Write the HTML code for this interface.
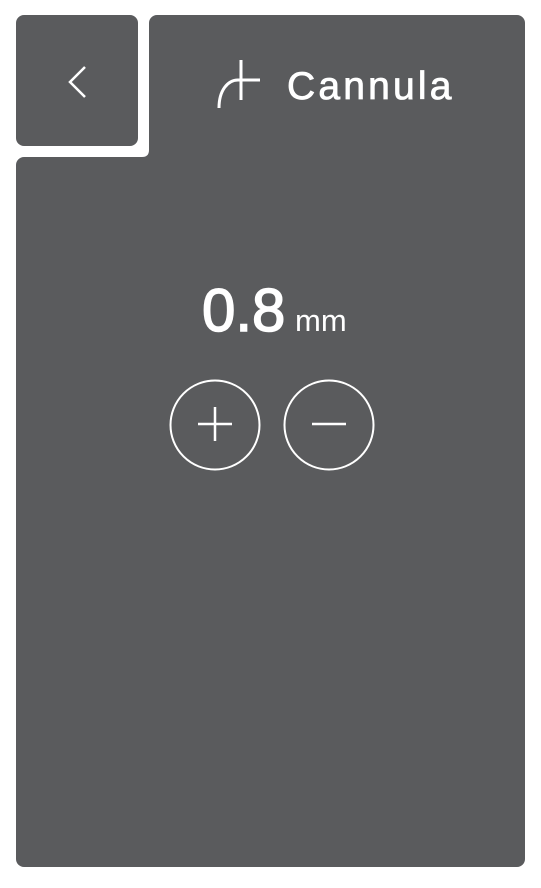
<!DOCTYPE html>
<html><head><style>
body{margin:0;width:541px;height:888px;background:#fff;position:relative;overflow:hidden;font-family:"Liberation Sans",sans-serif}
.d{position:absolute;background:#5a5b5d}
</style></head><body>
<div class="d" style="left:149px;top:15px;width:376px;height:200px;border-radius:8px 8px 0 0"></div>
<div class="d" style="left:16px;top:157px;width:509px;height:710px;border-radius:8px 0 8px 8px"></div>
<div class="d" style="left:16px;top:15px;width:122px;height:131px;border-radius:8px"></div>
<svg style="position:absolute;left:0;top:0" width="541" height="888">
<path d="M149 150 Q149 157 142 157 L149 157 Z" fill="#5a5b5d"/>
<path d="M85 67 L70 82 L85 97" fill="none" stroke="#fff" stroke-width="2.5"/>
<path d="M219 108 C219 90 228 80 238 80 L260 80 M241 60 V100" fill="none" stroke="#fff" stroke-width="3"/>
<circle cx="215" cy="425" r="44.5" fill="none" stroke="#fff" stroke-width="2"/>
<circle cx="329" cy="425" r="44.5" fill="none" stroke="#fff" stroke-width="2"/>
<path d="M198 424 H232 M215 407 V441 M312 424 H346" stroke="#fff" stroke-width="2.5"/>
</svg>
<div style="position:absolute;left:287px;top:63px;color:#fff;font-size:39px;font-weight:normal;letter-spacing:3.2px;line-height:48px;-webkit-text-stroke:0.8px #fff">Cannula</div>
<div style="position:absolute;left:202px;top:276px;color:#fff;font-size:60px;font-weight:normal;line-height:70px;-webkit-text-stroke:1.5px #fff">0.8</div>
<div style="position:absolute;left:295px;top:305px;color:#fff;font-size:31px;line-height:32px">mm</div>
</body></html>
